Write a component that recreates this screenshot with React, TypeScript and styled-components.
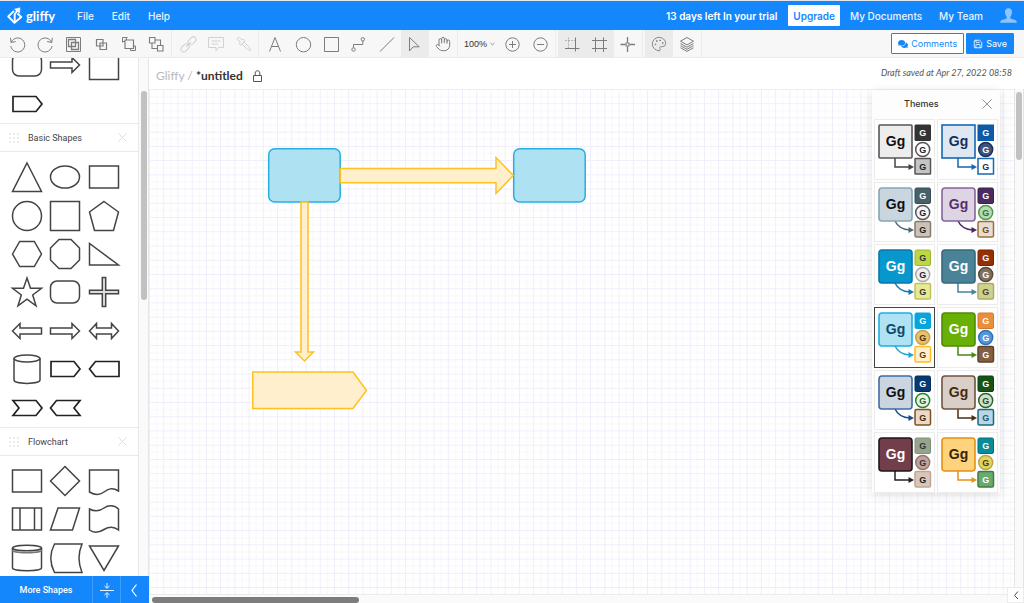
import React from "react";
import styled, { createGlobalStyle } from "styled-components";
import { FaComments } from "react-icons/fa";
import { Hand, Palette, Pipette, Save } from "lucide-react";

const blue = "#1587fd";
const ink = "#444";

const GlobalStyle = createGlobalStyle`
  * { box-sizing: border-box; }
  body {
    margin: 0;
    background: #fff;
    color: ${ink};
    font-family: Inter, "Open Sans", sans-serif;
    font-size: 10px;
    line-height: 14px;
  }
  button, select { font: inherit; color: inherit; }
  button { padding: 0; border: 0; background: none; cursor: pointer; }
  svg { display: block; }
`;

const Shell = styled.div`
  display: flex;
  flex-direction: column;
  height: 100vh;
  border-top: 1px solid #e3e6ea;
  overflow: hidden;
`;

/* ---------- top bar ---------- */

const TopBar = styled.header`
  display: flex;
  align-items: center;
  flex: none;
  height: 29px;
  padding: 0 7px;
  background: ${blue};
  color: #fff;
`;

const Brand = styled.a`
  display: flex;
  align-items: center;
  gap: 3px;
  width: 70px;
  color: #fff;
  font: 700 13px/18px Lato, sans-serif;
  text-decoration: none;
`;

const Menu = styled.nav`
  display: flex;
  gap: 18px;
`;

const MenuLink = styled.a`
  color: #e9f3ff;
  font-weight: 500;
  text-decoration: none;
`;

const Account = styled.div`
  display: flex;
  align-items: center;
  gap: 17px;
  margin-left: auto;
`;

const UpgradeGroup = styled.div`
  display: flex;
  align-items: center;
  gap: 11px;
  margin-right: -7px;
  font-weight: 600;
`;

const UpgradeButton = styled.button`
  height: 21px;
  padding: 0 5px;
  border-radius: 1px;
  background: #fff;
  color: ${blue};
  font-weight: 600;
`;

/* ---------- toolbar ---------- */

const ToolBar = styled.div`
  display: flex;
  flex: none;
  height: 28px;
  padding: 0 10px 0 1px;
  border-bottom: 1px solid #ebebeb;
  background: #f7f7f7;
`;

const ToolGroup = styled.div`
  display: flex;
  padding-left: 2px;
  border-right: 1px solid #ececec;
`;

const Tool = styled.button<{ $active?: boolean }>`
  display: grid;
  place-items: center;
  width: 28px;
  height: 28px;
  background: ${(p) => (p.$active ? "#ebebeb" : "transparent")};
  color: #7c7c7c;
  &:disabled { color: #d2d2d2; }
`;

const ZoomLabel = styled.label`
  display: flex;
  align-items: center;
  width: 39px;
  padding-left: 4px;
`;

const ZoomSelect = styled.select`
  width: 26px;
  padding: 0;
  border: 0;
  appearance: none;
  background: none;
  color: #333;
  font-family: "Liberation Sans", sans-serif;
  font-size: 9px;
`;

const Actions = styled.div`
  display: flex;
  align-items: center;
  gap: 2px;
  margin-left: auto;
`;

const ActionButton = styled.button<{ $solid?: boolean }>`
  display: flex;
  align-items: center;
  justify-content: center;
  gap: 3px;
  height: 21px;
  padding: 0 6px;
  border: 1px solid ${blue};
  border-radius: 1px;
  background: ${(p) => (p.$solid ? blue : "#fff")};
  color: ${(p) => (p.$solid ? "#fff" : blue)};
  font-size: 9px;
`;

/* ---------- shape library ---------- */

const Workspace = styled.div`
  display: flex;
  flex: 1;
  min-height: 0;
`;

const Sidebar = styled.aside`
  display: flex;
  flex-direction: column;
  flex: none;
  width: 149px;
`;

const LibraryArea = styled.div`
  display: flex;
  flex: 1;
  min-height: 0;
  border-right: 1px solid #e6e6e6;
`;

const Library = styled.div`
  flex: 1;
  overflow: hidden;
  border-right: 1px solid #e8e8e8;
  background: #fff;
`;

const ScrolledPart = styled.div`
  display: flex;
  align-items: flex-end;
  height: 65px;
  overflow: hidden;
`;

const SectionHead = styled.div`
  display: flex;
  align-items: center;
  height: 29px;
  padding: 0 11px 0 9px;
  border: solid #e9e9e9;
  border-width: 1px 0;
`;

const SectionName = styled.h2`
  flex: 1;
  margin: 0 0 0 9px;
  font: 400 9px/14px Roboto, sans-serif;
`;

const ShapeGrid = styled.div<{ $height: number }>`
  display: grid;
  grid-template-columns: repeat(3, 1fr);
  grid-auto-rows: 1fr;
  flex: none;
  width: 132px;
  height: ${(p) => p.$height}px;
  padding: 0 9px 0 8px;
`;

const SectionBody = styled.div`
  padding-top: 6px;
`;

const ShapeButton = styled.button`
  display: grid;
  place-items: center;
  min-width: 0;
  min-height: 0;
`;

const SideScroll = styled.div`
  width: 9px;
  padding: 33px 2px 0;
  background: #fafafa;
`;

const Thumb = styled.div<{ $length: number; $dark?: boolean; $across?: boolean }>`
  width: ${(p) => (p.$across ? `${p.$length}px` : "6px")};
  height: ${(p) => (p.$across ? "6px" : `${p.$length}px`)};
  border-radius: 3px;
  background: ${(p) => (p.$dark ? "#7d7d7d" : "#c1c1c1")};
`;

const SideFoot = styled.div`
  display: grid;
  grid-template-columns: 1fr 28px 29px;
  flex: none;
  height: 27px;
  background: ${blue};
  color: #fff;
`;

const FootButton = styled.button`
  display: grid;
  place-items: center;
  color: #fff;
  font: 500 9px/14px Roboto, sans-serif;
  & + & { border-left: 1px solid #3f9dfe; }
`;

/* ---------- document ---------- */

const Document = styled.main`
  position: relative;
  display: flex;
  flex-direction: column;
  flex: 1;
  min-width: 0;
`;

const DocHead = styled.div`
  display: flex;
  align-items: center;
  flex: none;
  height: 31px;
  padding: 5px 12px 0 7px;
`;

const DocTitle = styled.h1`
  margin: 0 10px 0 0;
  color: #333;
  font: 700 12px/16px Lato, sans-serif;
  span { color: #b9b9b9; font-weight: 400; }
`;

const SaveState = styled.em`
  margin-left: auto;
  padding-bottom: 6px;
  color: #555;
  font-family: Lato, sans-serif;
  font-size: 9px;
`;

const CanvasRow = styled.div`
  display: flex;
  flex: 1;
  min-height: 0;
`;

const Canvas = styled.div`
  flex: 1;
  min-width: 0;
`;

const DownScroll = styled.div`
  flex: none;
  width: 10px;
  padding: 3px 1px 0;
  border: solid #e4e4e4;
  border-width: 0 1px;
  background: #fafafa;
`;

const AcrossScroll = styled.div`
  flex: none;
  height: 9px;
  padding: 2px 3px 0;
  border-top: 1px solid #ececec;
  background: #fafafa;
`;

const PanelToggle = styled.button`
  position: absolute;
  right: 0;
  bottom: 0;
  display: grid;
  place-items: center;
  width: 17px;
  height: 16px;
  border: 1px solid #ececec;
  background: #fff;
`;

/* ---------- themes panel ---------- */

const ThemesPanel = styled.section`
  position: absolute;
  top: 32px;
  right: 24px;
  width: 128px;
  background: #fdfdfd;
  box-shadow: 0 2px 10px rgba(0, 0, 0, 0.12);
`;

const PanelHead = styled.div`
  display: flex;
  align-items: center;
  height: 29px;
  padding: 0 8px 2px 32px;
`;

const PanelTitle = styled.h2`
  flex: 1;
  margin: 0;
  color: #333;
  font-size: 9px;
  font-weight: 500;
`;

const ThemeGrid = styled.div`
  display: grid;
  grid-template: repeat(6, 1fr) / 1fr 1fr;
  gap: 2px;
  height: 374px;
  padding: 0 2px;
`;

const ThemeButton = styled.button<{ $selected?: boolean }>`
  min-height: 0;
  overflow: hidden;
  border: 1px solid ${(p) => (p.$selected ? "#444" : "#ececec")};
  background: #fff;
  text { font-family: "Liberation Sans", sans-serif; font-weight: 700; text-anchor: middle; }
`;

/* ---------- drawings ---------- */

function LineIcon({ children, size = 28 }: { children: React.ReactNode; size?: number }) {
  return (
    <svg width={size} height={size} viewBox={`0 0 ${size} ${size}`} fill="none" stroke="currentColor" strokeWidth="1" aria-hidden="true">
      {children}
    </svg>
  );
}

const icons = {
  undo: <><path d="M8.3 12.2A7 7 0 1 1 7.8 16" /><path d="M7.5 7.8l.5 4.6 4.7-.8" /></>,
  redo: <><path d="M20.5 12.2A7 7 0 1 0 21 16" /><path d="M21.3 7.8l-.5 4.6-4.7-.8" /></>,
  group: <><path d="M7.5 7.5h14v14h-14z" /><path d="M9.5 9.5h7v7h-7zM12.5 12.5h7v7h-7z" strokeWidth="1.3" /></>,
  ungroup: <path d="M9.5 9.5h6.5v6.5h-6.5zM13 13h6.5v6.5h-6.5z" strokeWidth="1.2" />,
  front: <><path d="M10 10h8.5v8.5h-8.5z" strokeWidth="1.2" /><path d="M7.5 12.5v-5h5M11.5 7.5v2.5M20.5 16v4.5h-5v-2M20.5 16h-2M7.5 11.5h2.5" /></>,
  back: <path d="M6.5 7.5h5.5v5.5h-5.5zM14.5 15.5h5.5v5.5h-5.5zM12 10h5.5v5.5M9 13v5.5h5.5" strokeWidth="1.1" />,
  link: <g transform="rotate(-45 14 14.5)"><rect x="5" y="12" width="9" height="5.5" rx="2.7" /><rect x="15" y="12" width="9" height="5.5" rx="2.7" /><path d="M11 14.8h7" /></g>,
  comment: <path d="M6.5 7.5h15v10h-5l-2.5 3.5v-3.5h-7.5zM9.5 11h9M9.5 14h6.5" />,
  text: <path d="M8.5 21.5L14 7.5l5.5 14M10.5 16.5h7" />,
  circle: <circle cx="14.5" cy="14.7" r="7.2" />,
  rect: <path d="M7.5 7.5h14v14h-14z" />,
  connector: <><circle cx="8.5" cy="19.5" r="1.7" /><circle cx="17.8" cy="9.3" r="1.7" /><path d="M8.5 17.8v-3.3h9.3V11" /></>,
  line: <path d="M7 21.5l14-14" />,
  pointer: <path d="M8.5 7.5v13.500l3.700-4.200h6z" />,
  plus: <><circle cx="13.5" cy="14.5" r="6.7" /><path d="M10 14.5h7M13.5 11v7" /></>,
  minus: <><circle cx="13.5" cy="14.5" r="6.7" /><path d="M10 14.5h7" /></>,
  snap: <><path d="M7 18.5h14.5M17.5 7.5v14" /><path d="M7 10.5h10M10.5 7.5v11" strokeDasharray="2 1" opacity=".5" /></>,
  grid: <path d="M6 10.5h15M6 18.5h15M9.5 7.5v14.5M17.5 7.5v14.5" />,
  guides: <><path d="M13.5 7v5.5M13.5 16.5v5.5M6.5 14.5h5M15.5 14.5h5.5" strokeWidth="1.3" /><rect x="12" y="13" width="3" height="3" /></>,
  layers: <><path d="M14 7.5l6.5 3.7-6.5 3.7-6.5-3.7z" /><path d="M7.5 13.5l6.5 3.7 6.5-3.7M7.5 15.6l6.5 3.7 6.5-3.7M7.5 17.7l6.5 3.7 6.5-3.7" /></>,
};

const rightArrow = <path d="M-14.5 -3H7v-4.5L14.5 0 7 7.5V3h-21.5z" />;
const rightTag = <path d="M-14 -7.5H9L15 0 9 7.5H-14z" stroke="#222" strokeWidth="1.7" />;
const roundRect = <rect x="-14.5" y="-11" width="29" height="22" rx="6.5" />;
const square = <rect x="-14.5" y="-14.5" width="29" height="29" />;
const rectangle = <rect x="-14.5" y="-11" width="29" height="22" />;

type Shape = [string, React.ReactNode];

const recentShapes: Shape[] = [
  ["Rounded rectangle", roundRect],
  ["Arrow", rightArrow],
  ["Square", square],
  ["Tag", rightTag],
];

const basicShapes: Shape[] = [
  ["Triangle", <path d="M0 -14L14.5 14.5H-14.5z" />],
  ["Ellipse", <ellipse rx="14.5" ry="11" />],
  ["Rectangle", rectangle],
  ["Circle", <circle r="14.5" />],
  ["Square", square],
  ["Pentagon", <path d="M0 -14.5L14.5 -4 9.5 14.5H-9.5L-14.5 -4z" />],
  ["Hexagon", <path d="M-14.5 0L-7.3 -12.5H7.3L14.5 0 7.3 12.5H-7.3z" />],
  ["Octagon", <path d="M-6 -14.5H6L14.5 -6V6L6 14.5H-6L-14.5 6V-6z" />],
  ["Right triangle", <path d="M-14.5 -10.5V11H14.5z" />],
  ["Star", <path d="M0 -14L3.5 -3.7H14.5L5.7 3 9 13.8 0 7.2-9 13.8-5.7 3-14.5 -3.7H-3.5z" />],
  ["Rounded rectangle", roundRect],
  ["Plus", <path d="M-1.7 -14.5H1.7V-1.7H14.5V1.7H1.7V14.5H-1.7V1.7H-14.5V-1.7H-1.7z" fill="#ddd" />],
  ["Left arrow", <path d="M14.5 -3H-7v-4.5L-14.5 0-7 7.5V3h21.5z" />],
  ["Right arrow", rightArrow],
  ["Double arrow", <path d="M-14.5 0L-7.5 -7.5V-3H7.5V-7.5L14.5 0 7.5 7.5V3H-7.5V7.5z" />],
  ["Cylinder", <><path d="M-13 -10.5V11C-13 15.5 13 15.5 13 11V-10.5" /><ellipse cy="-10.5" rx="13" ry="3.5" /></>],
  ["Right tag", rightTag],
  ["Left tag", <path d="M15 -7.5H-8.5L-14.5 0-8.5 7.5H15z" stroke="#222" strokeWidth="1.7" />],
  ["Right chevron", <path d="M-14 -7.5H9L15 0 9 7.5H-14L-8 0z" stroke="#222" strokeWidth="1.7" />],
  ["Left chevron", <path d="M15 -7.5H-8.5L-14.5 0-8.5 7.5H15L9 0z" stroke="#222" strokeWidth="1.7" />],
];

const flowShapes: Shape[] = [
  ["Process", rectangle],
  ["Decision", <path d="M0 -14.5L14.5 0 0 14.5-14.5 0z" />],
  ["Document", <path d="M-14.5 -11H14.5V10C8 6 4 8 0 11S-9 14.5-14.5 11z" />],
  ["Subprocess", <path d="M-14.5 -11H14.5V11H-14.5zM-7 -11V11M7.5 -11V11" />],
  ["Data", <path d="M-7 -11H14.5L7.5 11H-14.5z" />],
  ["Tape", <path d="M-14.5 -10C-9 -7-4 -8 0 -11S10 -14.5 14.5 -10V11C9 6.500 4 8 0 10.500S-9 15-14.500 11z" />],
  ["Database", <><path d="M-14.5 -10V10C-14.5 13.500 14.500 13.500 14.500 10V-10" /><path d="M-14.500 -8C-14.500 -4.300 14.500 -4.300 14.500 -8" stroke="#777" /><ellipse cy="-10" rx="14.5" ry="2.8" /></>],
  ["Stored data", <path d="M-10.5 -14H17Q11 0 17 14.5H-10.5Q-18 0-10.5 -14z" />],
  ["Merge", <path d="M-14.5 -12H14.5L0 12.5z" />],
];

function Shapes({ items, height }: { items: Shape[]; height: number }) {
  return (
    <ShapeGrid $height={height}>
      {items.map(([name, drawing], i) => (
        <ShapeButton key={i} aria-label={name}>
          <svg width="38" height="38" viewBox="-19 -19 38 38" fill="#fff" stroke="#444" strokeWidth="1.5">
            {drawing}
          </svg>
        </ShapeButton>
      ))}
    </ShapeGrid>
  );
}

function Cross({ size, color }: { size: number; color: string }) {
  return (
    <svg width={size} height={size} viewBox="0 0 10 10" fill="none" stroke={color} strokeWidth=".9">
      <path d="M.5 .5l9 9M9.5 .5l-9 9" />
    </svg>
  );
}

function Section({ name, items, height }: { name: string; items: Shape[]; height: number }) {
  return (
    <section>
      <SectionHead>
        <svg width="10" height="10" viewBox="0 0 10 10" fill="#d2d2d2">
          {[1, 5, 9].map((y) => [1, 5, 9].map((x) => <circle key={`${x}-${y}`} cx={x} cy={y} r=".8" />))}
        </svg>
        <SectionName>{name}</SectionName>
        <button aria-label={`Close ${name}`}><Cross size={9} color="#d8d8d8" /></button>
      </SectionHead>
      <SectionBody><Shapes items={items} height={height} /></SectionBody>
    </section>
  );
}

/* fill, border, letter colour */
type Paint = [string, string, string];

interface Theme {
  name: string;
  main: Paint;
  top: Paint;
  round: Paint;
  low: Paint;
  arrow: string;
  curved?: boolean;
  radius: number;
}

const themes: Theme[] = [
  { name: "Basic", main: ["#ededed", "#555", "#111"], top: ["#333", "#333", "#fff"], round: ["#fff", "#555", "#222"], low: ["#c4c4c4", "#555", "#222"], arrow: "#444", radius: 1 },
  { name: "Blueprint", main: ["#dfe7f3", "#1767b1", "#14305a"], top: ["#0b5ba7", "#0b5ba7", "#fff"], round: ["#3c5380", "#1c2f58", "#fff"], low: ["#fff", "#1767b1", "#14305a"], arrow: "#1767b1", radius: 0 },
  { name: "Slate", main: ["#c9d6df", "#86a5b5", "#111"], top: ["#476069", "#374d56", "#fff"], round: ["#f3f3f3", "#555", "#222"], low: ["#cdc2b6", "#837a70", "#222"], arrow: "#4c6a7a", curved: true, radius: 3 },
  { name: "Orchid", main: ["#ddd5e4", "#87639c", "#56306d"], top: ["#4b2b5f", "#3c204d", "#fff"], round: ["#b4dcae", "#4f9a50", "#2e7032"], low: ["#e8ddd0", "#9a6f3d", "#6b4a2a"], arrow: "#4b2460", curved: true, radius: 3 },
  { name: "Lagoon", main: ["#0698cd", "#0877aa", "#fff"], top: ["#bcd745", "#9db52e", "#333"], round: ["#eee", "#aaa", "#222"], low: ["#e8e995", "#bfc15e", "#333"], arrow: "#1079ae", curved: true, radius: 3 },
  { name: "Canyon", main: ["#4a8297", "#356a7d", "#fff"], top: ["#952f05", "#762403", "#fff"], round: ["#80705f", "#594a3c", "#fff"], low: ["#cfd18b", "#a8ad68", "#4b4232"], arrow: "#4a8297", radius: 3 },
  { name: "Sky", main: ["#afe2f2", "#1eaee2", "#0d496b"], top: ["#08a4dc", "#08a4dc", "#fff"], round: ["#e7c16d", "#c9a04c", "#4b3510"], low: ["#fff0cd", "#ffbd22", "#5a3d0c"], arrow: "#1ba5db", curved: true, radius: 3 },
  { name: "Meadow", main: ["#68b006", "#4d8c00", "#fff"], top: ["#eb8e3c", "#d97924", "#fff"], round: ["#5497db", "#2f70bd", "#fff"], low: ["#805f45", "#5f422b", "#fff"], arrow: "#498910", radius: 3 },
  { name: "Harbor", main: ["#cad5e0", "#3f6ca5", "#111"], top: ["#073a70", "#052e5c", "#fff"], round: ["#e5f2e4", "#27842b", "#1c641f"], low: ["#ead8c8", "#80501f", "#422910"], arrow: "#194b88", curved: true, radius: 3 },
  { name: "Forest", main: ["#d9cfc8", "#6c543f", "#432a12"], top: ["#155414", "#0d420d", "#fff"], round: ["#cee0cd", "#2c622b", "#174917"], low: ["#b9d6e2", "#176982", "#155a78"], arrow: "#4b2e13", radius: 3 },
  { name: "Burgundy", main: ["#733e4c", "#1f1719", "#fff"], top: ["#94a58c", "#7e9175", "#333"], round: ["#bea49d", "#97766f", "#333"], low: ["#dac6b8", "#bea797", "#222"], arrow: "#222", radius: 3 },
  { name: "Citrus", main: ["#ffd27c", "#e29316", "#352307"], top: ["#078c98", "#056c78", "#fff"], round: ["#e2d367", "#b9a83c", "#443a0a"], low: ["#6aaa6d", "#3e7c42", "#fff"], arrow: "#e29316", radius: 3 },
];

function ThemePreview({ theme }: { theme: Theme }) {
  const { main, top, round, low, arrow, curved, radius } = theme;
  return (
    <svg width="60" height="60" viewBox="0 0 60 60">
      <path d={curved ? "M20 38Q24 46.5 35 47" : "M20 38V47H35"} fill="none" stroke={arrow} strokeWidth="1.5" />
      <path d="M33.5 44L39 47l-5.5 3z" fill={arrow} />
      <rect x="4" y="5" width="33" height="33" rx={radius} fill={main[0]} stroke={main[1]} strokeWidth="1.6" />
      <text x="20.5" y="26" fontSize="14" fill={main[2]}>Gg</text>
      <rect x="40" y="5" width="15.5" height="15.5" rx={radius / 2} fill={top[0]} stroke={top[1]} />
      <text x="47.7" y="16" fontSize="9" fill={top[2]}>G</text>
      <circle cx="47.7" cy="29.5" r="7" fill={round[0]} stroke={round[1]} strokeWidth="1.5" />
      <text x="47.7" y="32.7" fontSize="9" fill={round[2]}>G</text>
      <rect x="40" y="38.5" width="15.5" height="15.5" rx={radius / 2} fill={low[0]} stroke={low[1]} strokeWidth="1.5" />
      <text x="47.7" y="49.5" fontSize="9" fill={low[2]}>G</text>
    </svg>
  );
}

function Diagram() {
  return (
    <svg width="100%" height="100%" role="img" aria-label="Diagram canvas">
      <defs>
        <pattern id="grid" width="14.23" height="14.23" patternUnits="userSpaceOnUse">
          <path d="M7.6 0V14.23M0 7.6H14.23" stroke="#f7f7fd" strokeWidth="1" />
          <path d="M.5 0V14.23M0 .5H14.23" stroke="#eeeefb" strokeWidth="1" />
        </pattern>
      </defs>
      <rect width="100%" height="100%" fill="#fff" />
      <rect width="100%" height="100%" fill="url(#grid)" />
      <g fill="#aee2f2" stroke="#29aee0" strokeWidth="1.5">
        <rect x="119.7" y="59.7" width="71.5" height="53.3" rx="6" />
        <rect x="364.7" y="59.7" width="71.5" height="53.3" rx="6" />
      </g>
      <g fill="#ffefcc" stroke="#ffc021" strokeWidth="1.5">
        <path d="M191.3 79.5H347V68.5L364.3 86.5 347 104.5V93.7H191.3z" />
        <path d="M152 113V263H146.5L155.5 272 164.5 263H159V113z" />
        <path d="M103.7 283H204L217.5 301.5 204 319.5H103.7z" />
      </g>
    </svg>
  );
}

export default function App() {
  return (
    <>
      <GlobalStyle />
      <Shell>
        <TopBar>
          <Brand href="#">
            <svg width="16" height="18" viewBox="0 0 16 18" fill="none" stroke="#fff" strokeWidth="1.9" strokeLinejoin="round">
              <path d="M7 4L1.3 9.5 7.5 15.8 14.3 10 10.5 6.5" />
              <path d="M7.7 15.5V7.5L11 2.5" />
              <path d="M7.5 2.2L13 .8 12.6 6z" fill="#fff" strokeWidth=".6" />
            </svg>
            gliffy
          </Brand>
          <Menu>
            <MenuLink href="#">File</MenuLink>
            <MenuLink href="#">Edit</MenuLink>
            <MenuLink href="#">Help</MenuLink>
          </Menu>
          <Account>
            <UpgradeGroup>
              13 days left In your trial
              <UpgradeButton>Upgrade</UpgradeButton>
            </UpgradeGroup>
            <MenuLink href="#">My Documents</MenuLink>
            <MenuLink href="#">My Team</MenuLink>
            <button aria-label="Account">
              <svg width="17" height="15" viewBox="0 0 17 15" fill="#8dc4ff">
                <path d="M8.5 .3c2.6 0 3.7 1.7 3.5 4-.2 2.2-.9 3.6-1.7 4.4v1.5c1.5 1 5 1.3 6 2.6.4.6.5 1.3.5 1.9H.2c0-.6.1-1.3.5-1.9 1-1.3 4.500-1.600 6-2.600V8.700C5.900 7.900 5.200 6.500 5 4.300 4.800 2 5.900 .3 8.500 .3z" />
              </svg>
            </button>
          </Account>
        </TopBar>

        <ToolBar>
          <ToolGroup>
            <Tool aria-label="Undo"><LineIcon>{icons.undo}</LineIcon></Tool>
            <Tool aria-label="Redo"><LineIcon>{icons.redo}</LineIcon></Tool>
            <Tool aria-label="Group"><LineIcon>{icons.group}</LineIcon></Tool>
            <Tool aria-label="Ungroup"><LineIcon>{icons.ungroup}</LineIcon></Tool>
            <Tool aria-label="Bring to front"><LineIcon>{icons.front}</LineIcon></Tool>
            <Tool aria-label="Send to back"><LineIcon>{icons.back}</LineIcon></Tool>
          </ToolGroup>
          <ToolGroup>
            <Tool aria-label="Link" disabled><LineIcon>{icons.link}</LineIcon></Tool>
            <Tool aria-label="Note" disabled><LineIcon>{icons.comment}</LineIcon></Tool>
            <Tool aria-label="Pick colour" disabled><Pipette size={16} strokeWidth={1.5} transform="scale(-1 1)" /></Tool>
          </ToolGroup>
          <ToolGroup>
            <Tool aria-label="Text"><LineIcon>{icons.text}</LineIcon></Tool>
            <Tool aria-label="Ellipse"><LineIcon>{icons.circle}</LineIcon></Tool>
            <Tool aria-label="Rectangle"><LineIcon>{icons.rect}</LineIcon></Tool>
            <Tool aria-label="Connector"><LineIcon>{icons.connector}</LineIcon></Tool>
            <Tool aria-label="Line"><LineIcon>{icons.line}</LineIcon></Tool>
            <Tool aria-label="Select" $active><LineIcon>{icons.pointer}</LineIcon></Tool>
            <Tool aria-label="Pan"><Hand size={16} strokeWidth={1.5} /></Tool>
          </ToolGroup>
          <ToolGroup>
            <ZoomLabel>
              <ZoomSelect aria-label="Zoom" defaultValue="100%">
                <option>100%</option>
              </ZoomSelect>
              <svg width="5" height="4" viewBox="0 0 5 4" fill="none" stroke="#777"><path d="M.5 1l2 1.8 2-1.8" strokeWidth=".8" /></svg>
            </ZoomLabel>
            <Tool aria-label="Zoom in"><LineIcon>{icons.plus}</LineIcon></Tool>
            <Tool aria-label="Zoom out"><LineIcon>{icons.minus}</LineIcon></Tool>
          </ToolGroup>
          <ToolGroup>
            <Tool aria-label="Snap to grid" $active><LineIcon>{icons.snap}</LineIcon></Tool>
            <Tool aria-label="Show grid" $active><LineIcon>{icons.grid}</LineIcon></Tool>
            <Tool aria-label="Guides"><LineIcon>{icons.guides}</LineIcon></Tool>
          </ToolGroup>
          <ToolGroup>
            <Tool aria-label="Themes" $active><Palette size={16} strokeWidth={1.3} /></Tool>
            <Tool aria-label="Layers"><LineIcon>{icons.layers}</LineIcon></Tool>
          </ToolGroup>
          <Actions>
            <ActionButton><FaComments size={10} />Comments</ActionButton>
            <ActionButton $solid><Save size={10} strokeWidth={2} />Save</ActionButton>
          </Actions>
        </ToolBar>

        <Workspace>
          <Sidebar>
            <LibraryArea>
              <Library>
                <ScrolledPart><Shapes items={recentShapes} height={77} /></ScrolledPart>
                <Section name="Basic Shapes" items={basicShapes} height={269} />
                <Section name="Flowchart" items={flowShapes} height={115} />
              </Library>
              <SideScroll><Thumb $length={209} /></SideScroll>
            </LibraryArea>
            <SideFoot>
              <FootButton>More Shapes</FootButton>
              <FootButton aria-label="Collapse sections">
                <LineIcon size={16}><path d="M1 8.5h14M8 1v5M5.5 4L8 6.3 10.5 4M8 16v-5M5.5 13L8 10.7l2.5 2.3" strokeWidth=".9" /></LineIcon>
              </FootButton>
              <FootButton aria-label="Hide library">
                <LineIcon size={14}><path d="M8.5 1.5L4 7.5l4.5 6" strokeWidth="1.2" /></LineIcon>
              </FootButton>
            </SideFoot>
          </Sidebar>

          <Document>
            <DocHead>
              <DocTitle><span>Gliffy / </span>*untitled</DocTitle>
              <svg width="9" height="12" viewBox="0 0 9 12" fill="none" stroke="#555" strokeWidth="1">
                <path d="M.5 5.5h8v6h-8zM2.2 5.500V3c0-3 4.600-3 4.600 0v2.500" />
              </svg>
              <SaveState>Draft saved at Apr 27, 2022 08:58</SaveState>
            </DocHead>
            <CanvasRow>
              <Canvas><Diagram /></Canvas>
              <DownScroll><Thumb $length={68} /></DownScroll>
            </CanvasRow>
            <AcrossScroll><Thumb $across $dark $length={207} /></AcrossScroll>
            <PanelToggle aria-label="Show panel">
              <LineIcon size={10}><path d="M7 1.5L3.5 5.5l3.5 3.5" /></LineIcon>
            </PanelToggle>
            <ThemesPanel>
              <PanelHead>
                <PanelTitle>Themes</PanelTitle>
                <button aria-label="Close themes"><Cross size={10} color="#888" /></button>
              </PanelHead>
              <ThemeGrid>
                {themes.map((theme) => (
                  <ThemeButton key={theme.name} aria-label={theme.name} $selected={theme.name === "Sky"}>
                    <ThemePreview theme={theme} />
                  </ThemeButton>
                ))}
              </ThemeGrid>
            </ThemesPanel>
          </Document>
        </Workspace>
      </Shell>
    </>
  );
}
